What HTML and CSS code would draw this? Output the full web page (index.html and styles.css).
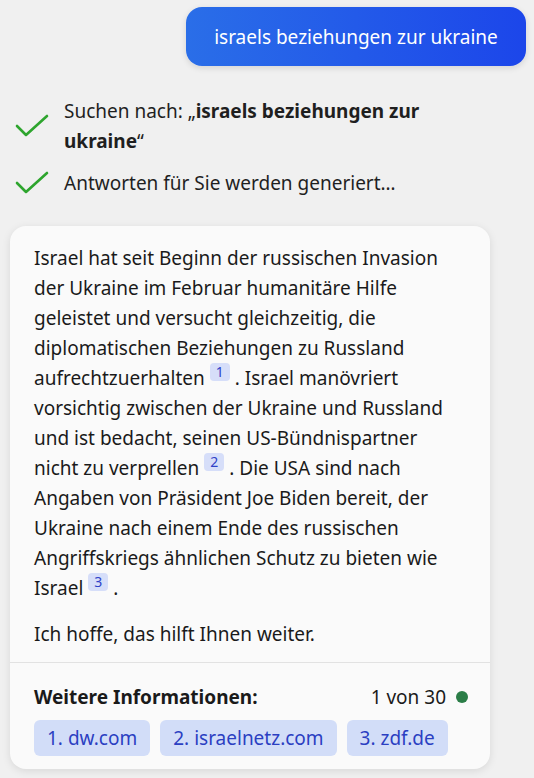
FILE: index.html
```html
<!DOCTYPE html>
<html lang="de">
<head>
  <meta charset="UTF-8">
  <meta name="viewport" content="width=device-width, initial-scale=1.0">
  <title>Chat</title>
  <link rel="stylesheet" href="styles.css">
</head>
<body>
  <!-- Frage des Nutzers -->
  <div class="user-row">
    <div class="bubble">israels beziehungen zur ukraine</div>
  </div>

  <!-- Fortschrittsschritte -->
  <div class="steps">
    <div class="step">
      <svg class="check" viewBox="0 0 34 24" width="34" height="24">
        <path d="M2 12 L11 21 L32 2" fill="none" stroke="#2ea52e" stroke-width="2.6" stroke-linecap="round" stroke-linejoin="round"/>
      </svg>
      <span class="step-text">Suchen nach: „<b>israels beziehungen zur ukraine</b>“</span>
    </div>
    <div class="step">
      <svg class="check" viewBox="0 0 34 24" width="34" height="24">
        <path d="M2 12 L11 21 L32 2" fill="none" stroke="#2ea52e" stroke-width="2.6" stroke-linecap="round" stroke-linejoin="round"/>
      </svg>
      <span class="step-text">Antworten für Sie werden generiert…</span>
    </div>
  </div>

  <!-- Antwortkarte -->
  <div class="card">
    <div class="answer">
      <p>Israel hat seit Beginn der russischen Invasion der Ukraine im Februar humanitäre Hilfe geleistet und versucht gleichzeitig, die diplomatischen Beziehungen zu Russland aufrechtzuerhalten<span class="cite">1</span>. Israel manövriert vorsichtig zwischen der Ukraine und Russland und ist bedacht, seinen US-Bündnispartner nicht zu verprellen<span class="cite">2</span>. Die USA sind nach Angaben von Präsident Joe Biden bereit, der Ukraine nach einem Ende des russischen Angriffskriegs ähnlichen Schutz zu bieten wie Israel<span class="cite">3</span>.</p>
      <p>Ich hoffe, das hilft Ihnen weiter.</p>
    </div>
    <div class="sources">
      <div class="sources-head">
        <b>Weitere Informationen:</b>
        <span class="count">1 von 30 <span class="dot"></span></span>
      </div>
      <div class="chips">
        <a class="chip">1. dw.com</a>
        <a class="chip">2. israelnetz.com</a>
        <a class="chip">3. zdf.de</a>
      </div>
    </div>
  </div>
</body>
</html>
```

FILE: styles.css
```css
/* Grundlayout */
* {
  box-sizing: border-box;
  margin: 0;
  padding: 0;
}
body {
  font-family: "Noto Sans", Roboto, sans-serif;
  font-size: 19px;
  line-height: 30px;
  color: #1a1a1a;
  background: #f0f0f0;
  width: 534px;
  min-height: 778px;
}
/* Nutzerfrage */
.user-row {
  display: flex;
  justify-content: flex-end;
  padding: 7px 8px 0 0;
}
.bubble {
  width: 340px;
  height: 59px;
  display: flex;
  align-items: center;
  justify-content: center;
  color: #fff;
  border-radius: 16px;
  background: linear-gradient(to right, #2a6ee8, #1c46ea);
  box-shadow: 0 2px 6px rgba(0, 0, 0, 0.12);
}
/* Schritte */
.steps {
  display: flex;
  flex-direction: column;
  gap: 12px;
  padding: 30px 20px 0 15px;
}
.step {
  display: flex;
  align-items: center;
  gap: 15px;
  color: #1f1f1f;
}
.step-text {
  max-width: 390px;
}
.check {
  flex-shrink: 0;
}
/* Karte */
.card {
  width: 480px;
  margin: 28px 0 0 10px;
  background: #fafafa;
  border-radius: 16px;
  box-shadow: 0 2px 8px rgba(0, 0, 0, 0.1);
}
.answer {
  padding: 17px 24px 13px;
  display: flex;
  flex-direction: column;
  gap: 16px;
}
.cite {
  display: inline-block;
  vertical-align: 8px;
  min-width: 20px;
  height: 18px;
  margin: 0 5px;
  padding: 0 5px;
  font-size: 14px;
  line-height: 18px;
  text-align: center;
  color: #2f42c8;
  background: #d6def9;
  border-radius: 4px;
}
.sources {
  border-top: 1px solid #e2e2e2;
  padding: 19px 22px 13px 24px;
}
.sources-head {
  display: flex;
  justify-content: space-between;
  align-items: center;
}
.count {
  display: flex;
  align-items: center;
  gap: 10px;
}
.dot {
  width: 12px;
  height: 12px;
  border-radius: 50%;
  background: #2b7d47;
}
.chips {
  display: flex;
  gap: 10px;
  margin-top: 8px;
}
.chip {
  height: 36px;
  padding: 0 13px;
  display: flex;
  align-items: center;
  color: #2b3fc2;
  background: #d2ddf8;
  border-radius: 6px;
}
```
